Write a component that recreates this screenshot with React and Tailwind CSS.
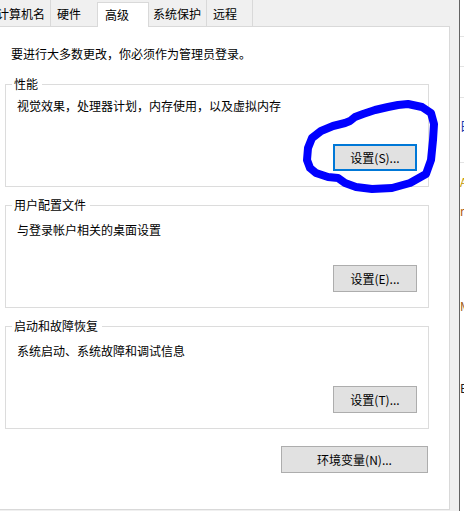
import React from "react";

const FONT = { fontFamily: '"Noto Sans CJK SC", "Microsoft YaHei", sans-serif' };

function Btn({ children, focused, className = "" }) {
  return (
    <div
      className={
        "flex items-center justify-center h-[27px] text-[12px] leading-[16px] text-black bg-[#e1e1e1] " +
        (focused ? "border-2 border-[#0078d7] " : "border border-[#adadad] ") +
        className
      }
    >
      {children}
    </div>
  );
}

function Group({ label, desc, btn, className = "", descClass, btnClass }) {
  return (
    <div className={"relative w-[424px] h-[103px] border border-[#dcdcdc] flex flex-col " + className}>
      <span className="absolute top-[-9px] left-[6px] bg-white pl-[2px] pr-[4px] text-[12px] leading-[16px] text-black">
        {label}
      </span>
      <div className={"pl-[11px] text-[12px] leading-[16px] text-black " + descClass}>{desc}</div>
      <div className={"self-end mr-[11px] " + btnClass}>{btn}</div>
    </div>
  );
}

export default function App() {
  return (
    <div className="relative w-[464px] h-[511px] overflow-hidden bg-[#f0f0f0] flex" style={FONT}>
      {/* Dialog tab control */}
      <div className="w-[450px] flex flex-col">
        {/* Tab strip */}
        <div className="h-[27px] flex items-end border-b border-[#d9d9d9] bg-[#f0f0f0] text-[12px] leading-[16px] text-black">
          <div className="w-[51px] h-[27px] border-r border-[#d9d9d9] flex items-center justify-end pr-[5px] pt-[3px] overflow-hidden whitespace-nowrap">
            <span className="shrink-0">计算机名</span>
          </div>
          <div className="w-[46px] h-[27px] flex items-center pl-[6px] pt-[3px] whitespace-nowrap">硬件</div>
          <div className="relative z-10 w-[52px] h-[25px] mb-[-1px] bg-white border-l border-r border-t border-[#d9d9d9] flex items-start pl-[7px] pt-[4px] whitespace-nowrap">
            高级
          </div>
          <div className="w-[58px] h-[27px] border-r border-[#d9d9d9] flex items-center pl-[4px] pt-[3px] whitespace-nowrap">
            系统保护
          </div>
          <div className="w-[46px] h-[27px] border-r border-[#d9d9d9] flex items-center pl-[6px] pt-[3px] whitespace-nowrap">
            远程
          </div>
        </div>
        {/* Panel */}
        <div className="h-[483px] bg-white border-r border-b border-[#d9d9d9] flex flex-col pl-[5px] pt-[19px]">
          <div className="ml-[6px] text-[12px] leading-[16px] text-black">要进行大多数更改，你必须作为管理员登录。</div>
          <Group
            className="mt-[22px]"
            label="性能"
            desc="视觉效果，处理器计划，内存使用，以及虚拟内存"
            descClass="pt-[13px]"
            btnClass="mt-[30px]"
            btn={<Btn focused className="w-[84px]">设置(S)...</Btn>}
          />
          <Group
            className="mt-[18px]"
            label="用户配置文件"
            desc="与登录帐户相关的桌面设置"
            descClass="pt-[16px]"
            btnClass="mt-[27px]"
            btn={<Btn className="w-[84px]">设置(E)...</Btn>}
          />
          <Group
            className="mt-[18px]"
            label="启动和故障恢复"
            desc="系统启动、系统故障和调试信息"
            descClass="pt-[16px]"
            btnClass="mt-[27px]"
            btn={<Btn className="w-[84px]">设置(T)...</Btn>}
          />
          <div className="w-[424px] flex justify-end pr-[1px] mt-[17px]">
            <Btn className="w-[147px]">环境变量(N)...</Btn>
          </div>
        </div>
      </div>
      {/* gap strip */}
      <div className="w-[9px] bg-[#f0f0f0]" />
      <div className="w-[1px] bg-[#646464]" />
      {/* neighbouring window, clipped */}
      <div className="relative flex-1 bg-white overflow-hidden">
        <div className="absolute left-0 top-[36px] w-full h-[1px] bg-[#e3e3e3]" />
        <div className="absolute left-0 top-[66px] w-full h-[1px] bg-[#e3e3e3]" />
        <div className="absolute left-0 top-[97px] w-full h-[1px] bg-[#e3e3e3]" />
        <div className="absolute left-0 top-[162px] w-full h-[1px] bg-[#e3e3e3]" />
        <span className="absolute left-0 top-[117px] text-[13px] leading-[16px] text-[#1a3fb0]">白</span>
        <span className="absolute left-0 top-[174px] text-[12px] leading-[16px] text-[#c49a00]">A</span>
        <span className="absolute left-0 top-[203px] text-[12px] leading-[16px] text-[#b05a10]">r</span>
        <span className="absolute left-0 top-[298px] text-[12px] leading-[16px] text-[#a05a10]">M</span>
        <span className="absolute left-0 top-[380px] text-[12px] leading-[16px] text-[#202020]">E</span>
      </div>
      {/* hand-drawn annotation */}
      <svg
        className="absolute left-0 top-0 pointer-events-none"
        width="464"
        height="511"
        viewBox="0 0 464 511"
      >
        <path
          d="M408,104 L398,105 L388,107 L375,110 L363,114 L355,117 L350,121 L345,123 L333,126 L321,131 L312,138 L308,148 L307,160 L310,168 L316,173 L328,177 L338,178 L345,183 L356,187 L372,189 L392,188 L410,183 L426,174 L431,160 L433,140 L434,124 L431,113 L422,107 Z"
          fill="none"
          stroke="#0000ff"
          strokeWidth="8"
          strokeLinejoin="round"
          strokeLinecap="round"
        />
      </svg>
    </div>
  );
}
